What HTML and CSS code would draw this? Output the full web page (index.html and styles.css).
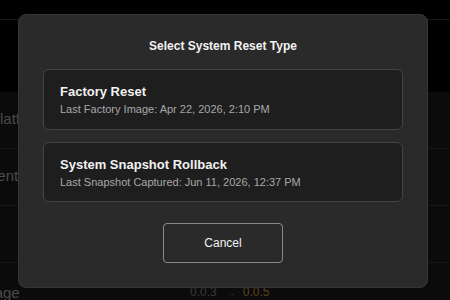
FILE: index.html
```html
<!DOCTYPE html>
<html lang="en">
<head>
    <meta charset="UTF-8">
    <meta name="viewport" content="width=device-width, initial-scale=1.0">
    <title>System Reset</title>
    <link rel="stylesheet" href="styles.css">
</head>
<body>
    <div class="page">
        <div class="topbar"></div>
        <div class="hero"></div>
        <div class="row"><span class="label">Platform</span></div>
        <div class="row"><span class="label label-b">Agent</span></div>
        <div class="row"><span class="label"></span></div>
        <div class="row row-last">
            <span class="label label-c">Image</span>
            <span class="version"><span class="old">0.0.3</span><span class="arrow">&rarr;</span><span class="new">0.0.5</span></span>
        </div>
    </div>

    <div class="overlay">
        <div class="modal">
            <h2 class="modal-title">Select System Reset Type</h2>
            <button class="option">
                <span class="option-title">Factory Reset</span>
                <span class="option-sub">Last Factory Image: Apr 22, 2026, 2:10 PM</span>
            </button>
            <button class="option">
                <span class="option-title">System Snapshot Rollback</span>
                <span class="option-sub">Last Snapshot Captured: Jun 11, 2026, 12:37 PM</span>
            </button>
            <div class="actions">
                <button class="cancel">Cancel</button>
            </div>
        </div>
    </div>
</body>
</html>
```

FILE: styles.css
```css
:root {
    --page-bg: #000000;
    --row-bg: #0b0b0b;
    --row-line: #171717;
    --dim-text: #4c4c4c;
    --modal-bg: #2a2a2a;
    --modal-border: #363636;
    --card-bg: #1e1e1e;
    --card-border: #444444;
    --text: #f2f2f2;
    --text-light: #a8a8a8;
}

* {
    box-sizing: border-box;
    margin: 0;
    padding: 0;
}

body {
    font-family: "Liberation Sans", Arial, sans-serif;
    background-color: var(--page-bg);
    width: 450px;
    height: 300px;
    overflow: hidden;
    position: relative;
}

/* dimmed page behind the dialog */
.topbar {
    height: 20px;
    border-bottom: 1px solid var(--row-line);
}

.hero {
    height: 72px;
}

.row {
    height: 57px;
    background-color: var(--row-bg);
    border-bottom: 1px solid var(--row-line);
    display: flex;
    align-items: center;
    color: var(--dim-text);
    font-size: 15px;
    padding-bottom: 4px;
}

.row-last {
    height: 37px;
    border-bottom: none;
    align-items: flex-start;
    padding: 22px 0 0;
}

.label {
    width: 200px;
    margin-left: -10px;
    white-space: nowrap;
}

.label-b {
    margin-left: -21px;
    width: 211px;
}

.label-c {
    margin-left: -22px;
    width: 212px;
    margin-top: -1px;
}

.version {
    font-size: 12px;
}

.version .old {
    color: #3a3a3a;
}

.version .arrow {
    color: #3a3a3a;
    font-size: 10px;
    margin: 0 7px 0 9px;
}

.version .new {
    color: #5a4416;
}

/* dialog */
.overlay {
    position: absolute;
    inset: 0;
}

.modal {
    position: absolute;
    left: 18px;
    top: 14px;
    width: 410px;
    height: 274px;
    background-color: var(--modal-bg);
    border: 1px solid var(--modal-border);
    border-radius: 8px;
    padding: 24px;
    display: flex;
    flex-direction: column;
}

.modal-title {
    color: var(--text);
    font-size: 12px;
    font-weight: 700;
    text-align: center;
    margin-bottom: 16px;
}

.option {
    display: flex;
    flex-direction: column;
    align-items: flex-start;
    width: 100%;
    height: 61px;
    padding: 14px 16px 0;
    margin-bottom: 12px;
    background-color: var(--card-bg);
    border: 1px solid var(--card-border);
    border-radius: 6px;
    font-family: inherit;
    text-align: left;
    cursor: pointer;
}

.option-title {
    color: var(--text);
    font-size: 13px;
    font-weight: 700;
    margin-bottom: 4px;
}

.option-sub {
    color: var(--text-light);
    font-size: 11px;
}

.actions {
    display: flex;
    justify-content: center;
    margin-top: 9px;
}

.cancel {
    width: 120px;
    height: 40px;
    background-color: transparent;
    border: 1px solid #8a8a8a;
    border-radius: 4px;
    color: var(--text);
    font-family: inherit;
    font-size: 12px;
    cursor: pointer;
}
```
